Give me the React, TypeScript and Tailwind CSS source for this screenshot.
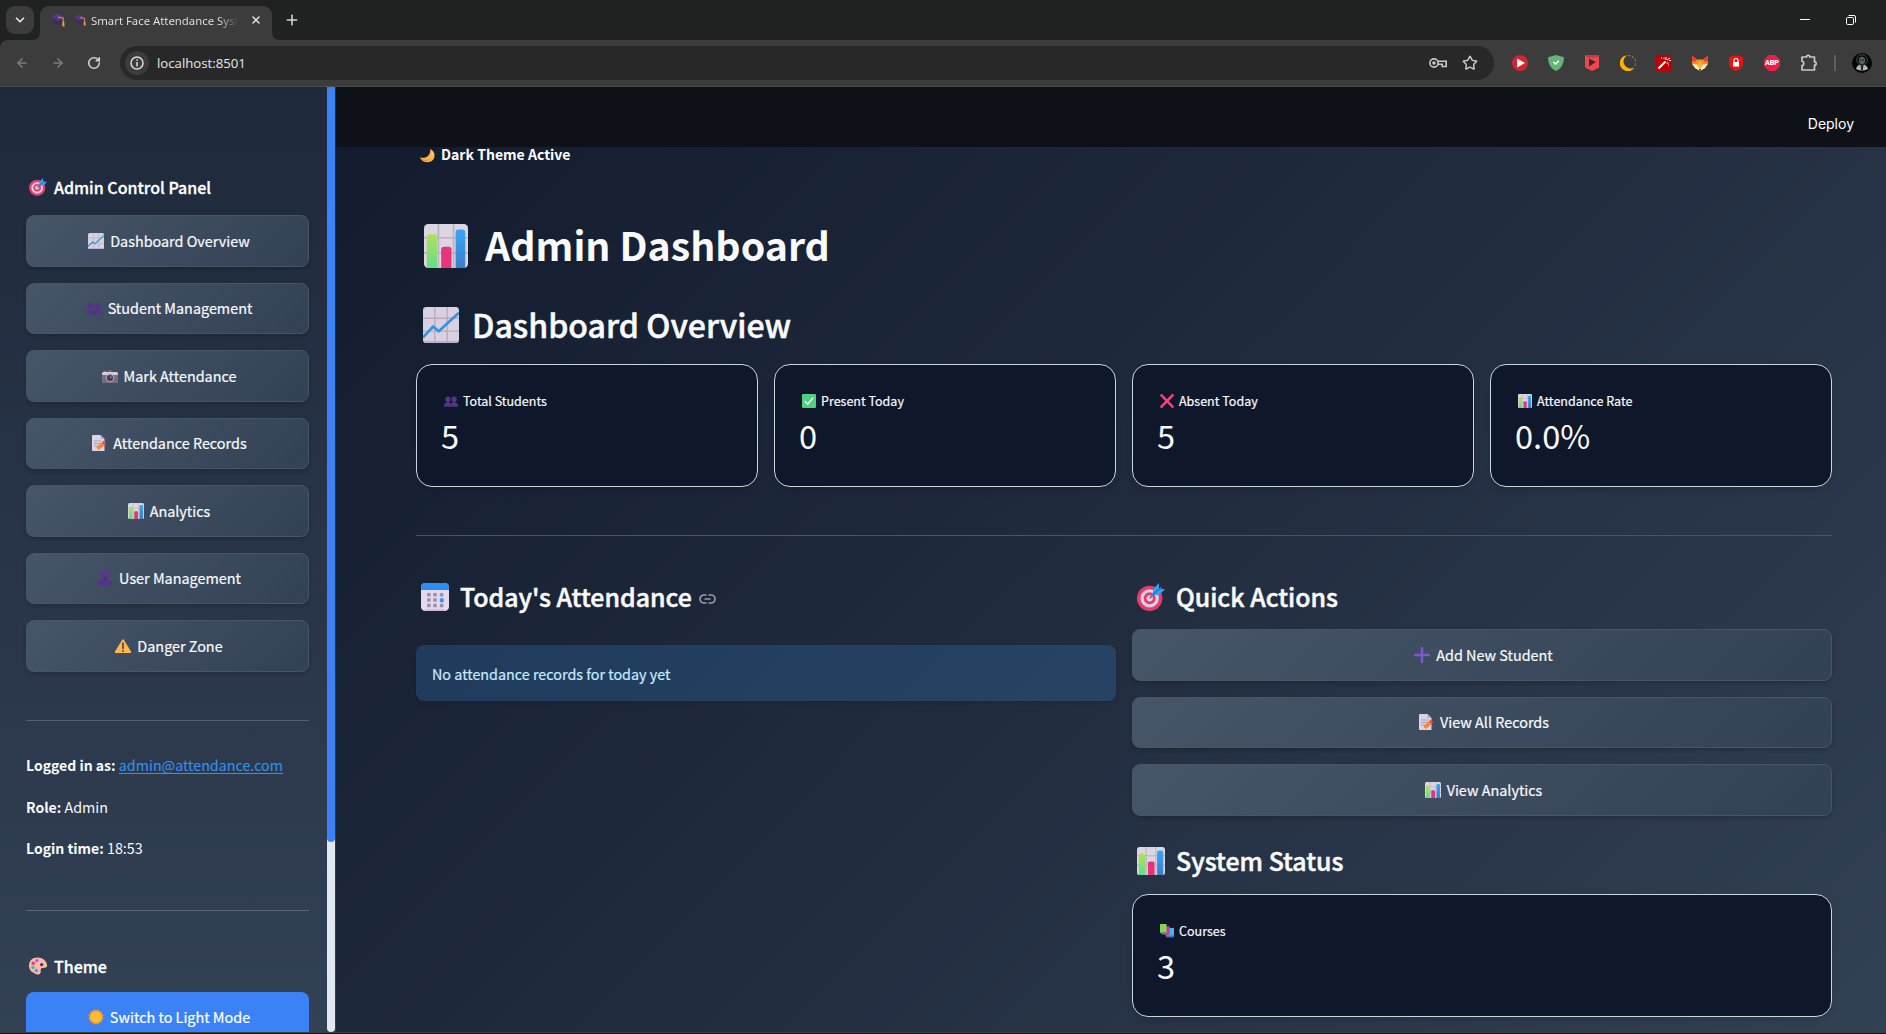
import type { ReactNode } from "react";
import { ArrowLeft, ArrowRight, ChevronDown, Plus, RotateCw, Star, X } from "lucide-react";

type IconProps = { className?: string };

const BarsIcon = ({ className = "" }: IconProps) => (
  <svg viewBox="0 0 32 32" className={className}>
    <defs>
      <linearGradient id="bg-green" x1="0" y1="0" x2="0" y2="1">
        <stop offset="0" stopColor="#b4e05a" />
        <stop offset="1" stopColor="#62dc8a" />
      </linearGradient>
      <linearGradient id="bg-blue" x1="0" y1="0" x2="0" y2="1">
        <stop offset="0" stopColor="#36a6f8" />
        <stop offset="1" stopColor="#3f7ccb" />
      </linearGradient>
    </defs>
    <rect width="32" height="32" rx="3" fill="#dcd5e2" />
    <path d="M10.5 0v32M21.5 0v32M0 10h32M0 21h32" stroke="#b9b2c0" strokeWidth="1.2" />
    <path d="M2 32V9.500q0-2 2-2h3.500q2 0 2 2V32Z" fill="url(#bg-green)" />
    <path d="M12.500 32V18.500q0-2 2-2h3.500q2 0 2 2V32Z" fill="#e5347a" />
    <path d="M23 32V6q0-2 2-2h3q2 0 2 2v26Z" fill="url(#bg-blue)" />
  </svg>
);

const TrendIcon = ({ className = "" }: IconProps) => (
  <svg viewBox="0 0 32 32" className={className}>
    <rect width="32" height="32" rx="3" fill="#d9d0e1" />
    <path d="M10.500 0v32M21.500 0v32M0 10h32M0 21.500h32" stroke="#b5adbd" strokeWidth="1.200" />
    <path d="M1 31h30" stroke="#bda6d0" strokeWidth="1.500" />
    <path d="m0 27 9-9.500 5 4L32 5" fill="none" stroke="#3294dc" strokeWidth="2.400" />
  </svg>
);

const PeopleIcon = ({ className = "" }: IconProps) => (
  <svg viewBox="0 0 32 32" className={className}>
    <g fill="#533487">
      <ellipse cx="9" cy="12" rx="6" ry="6.500" />
      <ellipse cx="23" cy="12" rx="6" ry="6.500" />
      <path d="M6.500 16h5v5h-5zM20.500 16h5v5h-5z" />
      <path d="M0 29v-3q0-6 6-6h6q3 0 4 2 1-2 4-2h6q6 0 6 6v3Z" />
    </g>
    <path d="M16 22v7" stroke="#3b2563" strokeWidth="1.500" />
  </svg>
);

const PersonIcon = ({ className = "" }: IconProps) => (
  <svg viewBox="0 0 32 32" className={className}>
    <ellipse cx="16" cy="9" rx="8" ry="8.500" fill="#5a3592" />
    <path d="M12.500 15h7v6h-7z" fill="#4a2c7c" />
    <path d="M1.500 31v-3q0-8 8.500-8h12q8.500 0 8.500 8v3Z" fill="#54338a" />
  </svg>
);

const CameraIcon = ({ className = "" }: IconProps) => (
  <svg viewBox="0 0 32 32" className={className}>
    <path d="M3 9V6h6v3Z" fill="#8d8693" />
    <path d="M0 11q0-3 3-3h26q3 0 3 3v4H0Z" fill="#d5ced9" />
    <path d="M0 14h32v16H0Z" fill="#786e80" />
    <circle cx="16" cy="20" r="8.500" fill="#a69caf" />
    <circle cx="16" cy="20" r="6" fill="#43394b" />
    <circle cx="17.500" cy="18.500" r="2" fill="#9f82b5" />
    <path d="M13 4h6v4h-6z" fill="#75677f" />
  </svg>
);

const MemoIcon = ({ className = "" }: IconProps) => (
  <svg viewBox="0 0 32 32" className={className}>
    <path d="M2 2q0-2 2-2h15l8 8v24H4q-2 0-2-2Z" fill="#dcd4e2" />
    <path d="m19 0 8 8h-8Z" fill="#b7adc0" />
    <path d="M6 12h15M6 17h15M6 22h8" stroke="#9b91a6" strokeWidth="1.600" />
    <path d="m8 31 2.500-7 5 4.500Z" fill="#ffd0a5" />
    <path d="m10.500 25 11-10 5.500 5L15.500 30Z" fill="#ff8038" />
    <path d="m21.500 15 4-3.500 5.500 5-4 3.500Z" fill="#e94f3d" />
  </svg>
);

const WarningIcon = ({ className = "" }: IconProps) => (
  <svg viewBox="0 0 32 32" className={className}>
    <path d="M14 4q2-3 4 0l14 23q1 3-2 3H2q-3 0-2-3Z" fill="#ffb84d" />
    <path d="M16 10v11" stroke="#493144" strokeWidth="3" strokeLinecap="round" />
    <circle cx="16" cy="26" r="1.800" fill="#493144" />
  </svg>
);

const TargetIcon = ({ className = "" }: IconProps) => (
  <svg viewBox="0 0 32 32" className={className}>
    <circle cx="14.500" cy="17.500" r="14.500" fill="#e43d6c" />
    <circle cx="14.500" cy="17.500" r="10.500" fill="#ddcfe4" />
    <circle cx="14.500" cy="17.500" r="6.800" fill="#e43d6c" />
    <circle cx="14.500" cy="17.500" r="3.600" fill="#ddcfe4" />
    <path d="M14.500 17.500 26 6" stroke="#8b5b7f" strokeWidth="1.800" />
    <path d="m17 14.500 2-8L25 0v6l7 1-6.500 6.500Z" fill="#36a2ef" />
    <path d="m18 13.500 10-9" stroke="#1d72c4" strokeWidth="1.500" />
  </svg>
);

const PaletteIcon = ({ className = "" }: IconProps) => (
  <svg viewBox="0 0 32 32" className={className}>
    <path
      fillRule="evenodd"
      d="M15 1C6 1 0 7 0 15c0 7 4 12 9 13 1 3 7 4 10 2 4-3 0-8 3-10 3-1 8 0 10-3C33 8 25 1 15 1Zm7.500 9.500a3 3 0 1 1 0 6 3 3 0 0 1 0-6Z"
      fill="#fbb9ab"
    />
    <circle cx="14" cy="6.500" r="3" fill="#b45cf0" />
    <circle cx="7.500" cy="11" r="3" fill="#f2307c" />
    <circle cx="7" cy="18.500" r="3" fill="#38bca6" />
    <circle cx="13" cy="24" r="3" fill="#3f9bf2" />
  </svg>
);

const SunIcon = ({ className = "" }: IconProps) => (
  <svg viewBox="0 0 32 32" className={className}>
    <g fill="#f5903a">
      <rect x="4.500" y="4.500" width="23" height="23" rx="2" />
      <rect x="4.500" y="4.500" width="23" height="23" rx="2" transform="rotate(30 16 16)" />
      <rect x="4.500" y="4.500" width="23" height="23" rx="2" transform="rotate(60 16 16)" />
    </g>
    <circle cx="16" cy="16" r="11.500" fill="#fcc02f" />
  </svg>
);

const MoonIcon = ({ className = "" }: IconProps) => (
  <svg viewBox="0 0 32 32" className={className}>
    <path d="M22 2c12 5 12 22 1 27C14 33 4 29 0 20c8 3 23 0 22-18Z" fill="#fdb64c" />
    <path d="M0 20c6 6 16 6 22 3-4 6-16 9-22-3Z" fill="#ee8a4e" />
    <circle cx="26" cy="13" r="1.800" fill="#ffda85" />
  </svg>
);

const CheckIcon = ({ className = "" }: IconProps) => (
  <svg viewBox="0 0 32 32" className={className}>
    <rect width="32" height="32" rx="2.500" fill="#4fcf83" />
    <path d="m7 17 6 6.500L25 9" fill="none" stroke="#fff" strokeWidth="3" strokeLinecap="round" />
  </svg>
);

const CrossIcon = ({ className = "" }: IconProps) => (
  <svg viewBox="0 0 32 32" className={className}>
    <path d="m3.500 3 25 26M28.500 3l-25 26" stroke="#f8407a" strokeWidth="6" strokeLinecap="round" />
  </svg>
);

const PlusEmoji = ({ className = "" }: IconProps) => (
  <svg viewBox="0 0 32 32" className={className}>
    <path d="M16 2v28M2 16h28" stroke="#7e57d0" strokeWidth="5" strokeLinecap="round" />
  </svg>
);

const CalendarIcon = ({ className = "" }: IconProps) => (
  <svg viewBox="0 0 32 32" className={className}>
    <rect width="32" height="32" rx="5" fill="#e5d9ee" />
    <path d="M0 8V5q0-5 5-5h22q5 0 5 5v3Z" fill="#2b8df8" />
    <path d="M5 31h22" stroke="#c9a8e0" strokeWidth="1.500" />
    <g fill="#9b90a8">
      <path d="M7 11.500h4v4H7zM14 11.500h4v4h-4zM21.500 11.500h4v4h-4zM7 17.500h4v4H7zM14 17.500h4v4h-4zM7 23.800h4v4H7zM14 23.800h4v4h-4zM21.500 23.800h4v4h-4z" />
    </g>
    <path d="M21.500 17.500h4.500v4.500h-4.500z" fill="#2b9af8" />
  </svg>
);

const BooksIcon = ({ className = "" }: IconProps) => (
  <svg viewBox="0 0 32 32" className={className}>
    <path d="M15 9h17v21H15Z" fill="#43b4f2" />
    <path d="M13 26h19v4H15Z" fill="#4b6fc8" />
    <path d="M9 5h13v19l-10 2-3-3Z" fill="#d7357b" />
    <path d="M0 0h15v20l-1 2H3l-3-3Z" fill="#86d45c" />
    <path d="M0 19h14l7 5H6Z" fill="#7f6a96" />
  </svg>
);

const GradCap = ({ className = "" }: IconProps) => (
  <svg viewBox="0 0 32 32" className={className}>
    <path d="M6 12h18v12q-9 5-18-2Z" fill="#3e2a62" />
    <path d="M0 9 14 1l17 8-14 9Z" fill="#553a80" />
    <path d="m16 9 12 3v8" fill="none" stroke="#e88b42" strokeWidth="2.500" />
    <path d="m26 20 4-1 1 12-5-1Z" fill="#f6a03c" />
  </svg>
);

function BrowserTabs() {
  return (
    <div className="flex h-10 bg-[#202221] pl-1.5">
      <div className="mt-1.5 flex size-7 items-center justify-center rounded-[9px] bg-[#3c3c3c] text-[#e3e3e3]">
        <ChevronDown className="size-3.5" strokeWidth={3} />
      </div>
      <div className="relative mt-1.5 ml-1.5 flex h-[34px] w-[232px] items-center rounded-t-[9px] bg-[#3c3c3c] pl-[11px]">
        <svg viewBox="0 0 8 8" className="absolute bottom-0 -left-2 size-2">
          <path d="M8 0v8H0q8 0 8-8Z" fill="#3c3c3c" />
        </svg>
        <svg viewBox="0 0 8 8" className="absolute -right-2 bottom-0 size-2">
          <path d="M0 0v8h8q-8 0-8-8Z" fill="#3c3c3c" />
        </svg>
        <GradCap className="mb-1.5 size-3.5" />
        <GradCap className="mb-1.5 ml-[9px] size-3" />
        <div className="mb-1 ml-[5px] w-[150px] bg-linear-to-r from-[#e6e6e6] from-85% to-transparent to-98% bg-clip-text font-['Noto_Sans'] text-[11.4px] leading-5 tracking-[-0.02px] whitespace-nowrap text-transparent">
          Smart Face Attendance Syst
        </div>
        <X className="mb-1.5 ml-[9px] size-3" strokeWidth={3} color="#e3e3e3" />
      </div>
      <Plus className="mt-3 ml-3 size-4 text-[#d5d5d5]" strokeWidth={2.4} />
      <div className="ml-auto flex pt-[15px]">
        <div className="mt-1 h-px w-2.5 bg-white" />
        <svg viewBox="0 0 10 10" className="mr-[30px] ml-9 size-2.5" fill="none" stroke="#fff">
          <rect x=".5" y="2.500" width="7" height="7" rx="1.200" />
          <path d="M2.500.5H8Q9.500.5 9.500 2v5.500" />
        </svg>
      </div>
    </div>
  );
}

function Extensions() {
  return (
    <div className="flex items-center gap-5">
      <svg viewBox="0 0 16 16" className="size-4">
        <circle cx="8" cy="8" r="8" fill="#d3252f" />
        <path d="M5.200 3.500 13 8l-7.800 4.500Z" fill="#fff" />
      </svg>
      <svg viewBox="0 0 16 16" className="size-4">
        <path d="M8 0 16 2.200c0 7-3 11.500-8 13.800C3 13.700 0 9.200 0 2.200Z" fill="#67b279" />
        <path d="m5.500 7 2 2L11 5.800" fill="none" stroke="#fff" strokeWidth="1.500" />
      </svg>
      <svg viewBox="0 0 16 16" className="size-4">
        <path d="M1 0h14v12.500L8 16l-7-3.500Z" fill="#ef4652" />
        <path d="M1 0h14v2L4 3Z" fill="#c93946" />
        <path d="M5 3.500 12 7l-7 4.500Z" fill="#3c2a30" />
      </svg>
      <svg viewBox="0 0 16 16" className="size-4">
        <path d="M7 .2A8 8 0 1 0 14.500 12.500 6.500 6.500 0 0 1 7 .2Z" fill="#ffb300" />
        <path d="M8 .6a7.400 7.400 0 0 1 7 11" fill="none" stroke="#c98e0b" strokeDasharray="2.500 1.500" />
      </svg>
      <svg viewBox="0 0 16 16" className="size-4">
        <path d="M0 0h16v16H0z" fill="#c00000" />
        <path d="m2.500 13.500 7-7" stroke="#fff" strokeWidth="2.200" />
        <path d="M10 2v3M12.500 8h-2M11 5l3-2M13 5.500h2M5 3h1M8 2.500v1.500M12.500 9.500v1" stroke="#fff" />
      </svg>
      <svg viewBox="0 0 16 16" className="size-4">
        <path d="m0 1 5 3.500h6L16 1v8l-3 4-5 3-5-3-3-4Z" fill="#f98c1f" />
        <path d="m11 4.500 5-4V6l-2.500 1ZM5 4.500l-5-4V6l2.500 1Z" fill="#ee3f35" />
        <path d="m.5 9 4.500.5L8 14l3-4.500 4.500-.5-2.500 4-5 3-5-3Z" fill="#fff0cc" />
        <path d="m8 5 2.500 5L8 14l-2.500-4Z" fill="#ffb02e" />
        <path d="M7 14h2v1.500H7z" fill="#423026" />
      </svg>
      <svg viewBox="0 0 16 16" className="size-4">
        <path d="m8 0 7 2v6c0 4-3 6.500-7 8-4-1.500-7-4-7-8V2Z" fill="#ee1111" />
        <rect x="5" y="7" width="6" height="4.500" fill="#fff" />
        <path d="M6 7V5.500a2 2 0 0 1 4 0V7" fill="none" stroke="#fff" strokeWidth="1.200" />
      </svg>
      <div className="flex size-4 items-center justify-center bg-[#ed1e45] font-['Roboto'] text-[7px] font-black text-white [clip-path:polygon(30%_0,70%_0,100%_30%,100%_70%,70%_100%,30%_100%,0_70%,0_30%)]">
        ABP
      </div>
      <svg viewBox="0 0 18 18" className="size-[18px]" fill="none" stroke="#c7c7c7" strokeWidth="1.700">
        <path d="M2 3h4.500a1.700 1.700 0 0 1 3.400 0h4.600v4.800a1.700 1.700 0 0 1 0 3.400V16H2v-4.300a2.300 2.300 0 0 0 0-4.500Z" strokeLinejoin="round" />
      </svg>
    </div>
  );
}

function BrowserToolbar() {
  return (
    <div className="bg-[#202221]">
      <div className="flex h-[47px] items-center rounded-tl-lg border-b border-[#4a4a4a] bg-[#3c3c3c] pl-[15px]">
        <ArrowLeft className="size-3.5 text-[#7c7c7c]" strokeWidth={2.6} />
        <ArrowRight className="ml-[22px] size-3.5 text-[#7c7c7c]" strokeWidth={2.6} />
        <RotateCw className="ml-[22px] size-3.5 text-[#d0d0d0]" strokeWidth={2.8} />
        <div className="ml-[19px] flex h-[34px] w-[1374px] items-center rounded-full bg-[#282828] pl-[5px]">
          <div className="flex size-6 items-center justify-center rounded-full bg-[#3c3c3c]">
            <svg viewBox="0 0 14 14" className="size-3.5" fill="none" stroke="#dcdcdc" strokeWidth="1.500">
              <circle cx="7" cy="7" r="6" />
              <path d="M7 6v4.500M7 3.200v1.600" />
            </svg>
          </div>
          <span className="ml-2 font-['Open_Sans'] text-[13.2px] leading-5 text-[#e8e8e8]">localhost:8501</span>
          <svg viewBox="0 0 18 10" className="ml-auto h-2.5 w-[18px]" fill="none" stroke="#c7c7c7" strokeWidth="1.600">
            <circle cx="5" cy="5" r="4.100" />
            <circle cx="5" cy="5" r="1" fill="#c7c7c7" />
            <path d="M9 3.300h8.200v5.200h-4V6.200H9" />
          </svg>
          <Star className="mr-4 ml-[15px] size-4 text-[#c7c7c7]" strokeWidth={2.2} />
        </div>
        <div className="ml-[18px]">
          <Extensions />
        </div>
        <div className="ml-4 h-4 w-0.5 bg-[#5e5e5e]" />
        <svg viewBox="0 0 20 20" className="ml-4 size-5">
          <circle cx="10" cy="10" r="10" fill="#050505" />
          <circle cx="10" cy="7" r="5.300" fill="none" stroke="#2f5b3a" />
          <ellipse cx="10" cy="7.500" rx="3.200" ry="3.800" fill="#59615d" />
          <path d="M8 7h1.500M10.500 7H12" stroke="#070707" />
          <path d="M4 16q1-4 4-4l2 2 2-2q3 0 4 4-6 3-12 0Z" fill="#b3b8b5" />
          <path d="m9 13 1 4 1-4" stroke="#111" fill="none" />
        </svg>
      </div>
    </div>
  );
}

function PanelButton({ icon, children }: { icon: ReactNode; children: ReactNode }) {
  return (
    <button className="flex h-[51.500px] w-full shrink-0 items-center justify-center rounded-lg border border-[#475569] bg-linear-135 from-[#475569] to-[#334155] text-[14.400px] leading-5 text-slate-50 shadow-[0_2px_4px_rgba(0,0,0,0.2)] [-webkit-text-stroke:0.2px]">
      <span className="flex w-[25px] pl-[3px]">{icon}</span>
      {children}
    </button>
  );
}

const navItems = [
  { label: "Dashboard Overview", Icon: TrendIcon },
  { label: "Student Management", Icon: PeopleIcon },
  { label: "Mark Attendance", Icon: CameraIcon },
  { label: "Attendance Records", Icon: MemoIcon },
  { label: "Analytics", Icon: BarsIcon },
  { label: "User Management", Icon: PersonIcon },
  { label: "Danger Zone", Icon: WarningIcon },
];

function Sidebar() {
  return (
    <aside className="flex w-[336px] shrink-0 overflow-hidden bg-linear-to-b from-[#1e293b] to-[#334155]">
      <div className="flex w-[327px] flex-col pr-[18px] pl-[26px]">
        <h3 className="mt-[88px] flex h-6 items-center text-base leading-6 font-medium text-white [-webkit-text-stroke:0.3px]">
          <TargetIcon className="mr-[7px] ml-[3px] size-[18px]" />
          Admin Control Panel
        </h3>
        <nav className="mt-4 flex flex-col gap-4">
          {navItems.map(({ label, Icon }) => (
            <PanelButton key={label} icon={<Icon className="size-4" />}>
              {label}
            </PanelButton>
          ))}
        </nav>
        <div className="mt-[48.500px] h-px shrink-0 bg-[#535f6f]" />
        <div className="mt-[34px] flex flex-col gap-[21.600px] text-[14.300px] leading-5 text-slate-50">
          <p className="whitespace-nowrap">
            <b className="text-[14px]">Logged in as:</b>{" "}
            <a className="text-[#3094f5] underline underline-offset-2">admin@attendance.com</a>
          </p>
          <p>
            <b className="text-[14px]">Role:</b> Admin
          </p>
          <p>
            <b className="text-[14px]">Login time:</b> 18:53
          </p>
        </div>
        <div className="mt-[51.500px] h-px shrink-0 bg-[#5b6675]" />
        <h3 className="mt-[43px] flex h-6 items-center text-base leading-6 font-medium text-white [-webkit-text-stroke:0.3px]">
          <PaletteIcon className="mr-[7px] ml-[3px] size-[18px]" />
          Theme
        </h3>
        <button className="mt-3.5 flex h-[50px] shrink-0 items-center justify-center rounded-lg bg-[#3b82f6] text-[14.400px] leading-5 text-white [-webkit-text-stroke:0.2px]">
          <span className="flex w-[25px] pl-[3px]">
            <SunIcon className="size-4" />
          </span>
          Switch to Light Mode
        </button>
      </div>
      <div className="h-[945px] w-2 overflow-hidden rounded-b bg-slate-200">
        <div className="h-[755px] rounded-b bg-[#3b82f6]" />
      </div>
    </aside>
  );
}

function Metric({ icon, label, value }: { icon: ReactNode; label: string; value: string }) {
  return (
    <div className="h-[123px] flex-1 rounded-2xl border border-slate-300 bg-[#0f172a] px-6 pt-[26px] text-slate-50 shadow-[0_4px_6px_rgba(0,0,0,0.1)]">
      <div className="flex h-5 items-center text-[12.500px] leading-5 [-webkit-text-stroke:0.2px]">
        <span className="w-[22px] pl-[3px]">{icon}</span>
        {label}
      </div>
      <div className="mt-1 text-[32.600px] leading-10">{value}</div>
    </div>
  );
}

function SectionHeading({ icon, children }: { icon: ReactNode; children: ReactNode }) {
  return (
    <h3 className="flex h-8 items-center text-[24.900px] leading-8 font-medium whitespace-nowrap text-slate-50 [-webkit-text-stroke:0.5px]">
      <span className="mt-0.5 w-11 pl-[5px]">{icon}</span>
      {children}
    </h3>
  );
}

function Dashboard() {
  return (
    <main className="flex flex-1 flex-col">
      <header className="flex h-[60px] items-center justify-end bg-[#0e1117] pt-[13px] pr-8 font-['Inter'] text-sm text-white">
        Deploy
      </header>
      <div className="flex flex-col pr-[54px] pl-20">
        <p className="-mt-[3px] flex h-5 items-center text-[14.050px] leading-5 font-bold text-white">
          <MoonIcon className="mt-0.5 mr-1.5 ml-1 size-[15px]" />
          Dark Theme Active
        </p>
        <h1 className="mt-[54px] flex h-[52px] items-center text-[39.300px] leading-[52px] font-bold text-slate-50">
          <span className="mt-1 w-[69px] pl-2">
            <BarsIcon className="size-11" />
          </span>
          Admin Dashboard
        </h1>
        <h2 className="mt-8 flex h-11 items-center text-[32.100px] leading-[44px] font-medium text-slate-50 [-webkit-text-stroke:0.5px]">
          <span className="mt-0.5 w-14 pl-[7px]">
            <TrendIcon className="size-9" />
          </span>
          Dashboard Overview
        </h2>
        <section className="mt-[18px] flex gap-4">
          <Metric icon={<PeopleIcon className="size-3.5" />} label="Total Students" value="5" />
          <Metric icon={<CheckIcon className="size-3.5" />} label="Present Today" value="0" />
          <Metric icon={<CrossIcon className="size-3.5" />} label="Absent Today" value="5" />
          <Metric icon={<BarsIcon className="size-3.5" />} label="Attendance Rate" value="0.0%" />
        </section>
        <div className="mt-12 h-px bg-[#4a5464]" />
        <div className="mt-11 flex gap-4">
          <section className="flex-1">
            <div className="flex items-center">
              <SectionHeading icon={<CalendarIcon className="size-[28px]" />}>Today's Attendance</SectionHeading>
              <svg viewBox="0 0 17 10" className="mt-1.5 ml-[7px] h-2.5 w-[17px]" fill="none" stroke="#969ca5" strokeWidth="1.700">
                <path d="M7.500 1H5a4 4 0 0 0 0 8h2.500M9.500 1H12a4 4 0 0 1 0 8H9.500M5.500 5h6" />
              </svg>
            </div>
            <div className="mt-[33px] flex h-14 items-center rounded-lg bg-[#3d9df3]/20 px-4 pt-px text-[14.350px] text-[#c7ebff] shadow-[0_2px_4px_rgba(0,0,0,0.1)] [-webkit-text-stroke:0.2px]">
              No attendance records for today yet
            </div>
          </section>
          <section className="flex-1">
            <SectionHeading icon={<TargetIcon className="size-[28px]" />}>Quick Actions</SectionHeading>
            <div className="mt-[17px] flex flex-col gap-4">
              <PanelButton icon={<PlusEmoji className="size-4" />}>Add New Student</PanelButton>
              <PanelButton icon={<MemoIcon className="size-4" />}>View All Records</PanelButton>
              <PanelButton icon={<BarsIcon className="size-4" />}>View Analytics</PanelButton>
            </div>
            <div className="mt-7">
              <SectionHeading icon={<BarsIcon className="size-[28px]" />}>System Status</SectionHeading>
            </div>
            <div className="mt-[18px] flex">
              <Metric icon={<BooksIcon className="size-3.5" />} label="Courses" value="3" />
            </div>
          </section>
        </div>
      </div>
    </main>
  );
}

export default function App() {
  return (
    <div className="flex h-[1034px] w-[1886px] flex-col overflow-hidden bg-[#15181c] font-['Noto_Sans_CJK_SC',sans-serif]">
      <BrowserTabs />
      <BrowserToolbar />
      <div className="flex h-[945px] overflow-hidden bg-linear-135 from-[#0f172a] via-[#1e293b] to-[#334155]">
        <Sidebar />
        <Dashboard />
      </div>
      <div className="h-px bg-[#3c3c3c]" />
    </div>
  );
}
